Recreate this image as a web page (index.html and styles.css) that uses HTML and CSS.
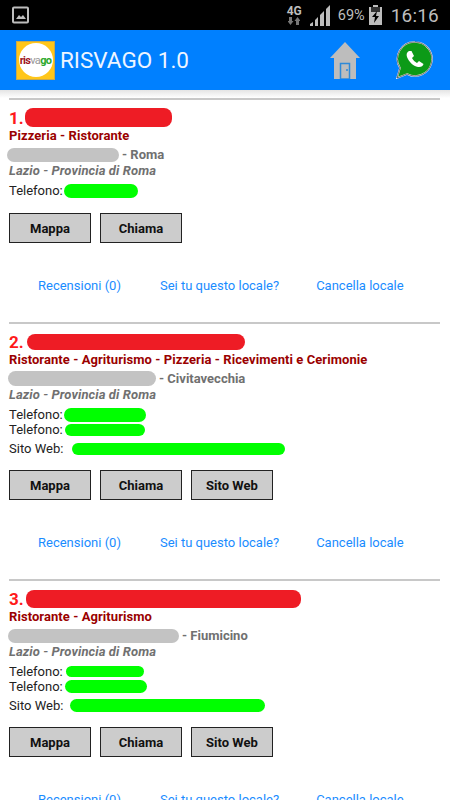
FILE: index.html
```html
<!DOCTYPE html>
<html>
<head>
	<meta charset="UTF-8">
	<title>RISVAGO 1.0</title>
	<link rel="stylesheet" href="styles.css">
</head>
<body>
<div class="phone">
	<div class="statusbar">
		<svg class="pic-icon" width="17" height="18" viewBox="0 0 17 18">
			<rect x="1" y="1.500" width="15" height="15" rx="1" fill="#000" stroke="#bdbdbd" stroke-width="2"/>
			<path d="M4 13l3-4 2 2 2-2 3 4z" fill="#bdbdbd"/>
		</svg>
		<div class="status-right">
			<div class="net"><span>4G</span><svg width="12" height="8" viewBox="0 0 12 8"><path d="M1 0h3v4h1.500L2.500 8-.5 4H1zM8 8h3V4h1.500L9.500 0l-3 4H8z" fill="#777"/></svg></div>
			<svg class="signal" width="20" height="21" viewBox="0 0 20 21">
				<path d="M0 21v-2l3-2v4zM5 21v-6l3-3v9zM10 21V10l4-4v15zM16 21V4l4-4v21z" fill="#bdbdbd"/>
			</svg>
			<span class="pct">69%</span>
			<svg class="batt" width="13" height="20" viewBox="0 0 13 20">
				<path d="M4 0h5v2h4v18H0V2h4z" fill="#bdbdbd"/>
				<path d="M2 2h9v5H2z" fill="#333"/>
				<path d="M8 6L3 12h3l-1 6 5-7H7z" fill="#000"/>
			</svg>
			<span class="clock">16:16</span>
		</div>
	</div>

	<div class="topbar">
		<div class="logo"><div class="logo-disc"><span class="r1">ris</span><span class="r2">va</span><span class="r3">go</span></div></div>
		<div class="app-title">RISVAGO 1.0</div>
		<svg class="home" width="30" height="37" viewBox="0 0 30 37">
			<path d="M15 0L30 16H0z" fill="#bdbdbd"/>
			<path d="M4 16h22v21H4z" fill="#bdbdbd"/>
			<path d="M10.500 21.500h9V37h-9z" fill="none" stroke="#2f8ad8" stroke-width="1.500"/>
			<circle cx="17" cy="28" r="1" fill="#2f8ad8"/>
		</svg>
		<svg class="whatsapp" width="37" height="38" viewBox="0 0 37 38">
			<path d="M19 1a17 17 0 1 1-8 32L1 37l3-10A17 17 0 0 1 19 1z" fill="#0c9a17" stroke="#fff" stroke-width="1.500"/>
			<path d="M19 1a17 17 0 1 1-8 32L1 37l3-10A17 17 0 0 1 19 1z" fill="none" stroke="#111" stroke-width=".6"/>
			<path d="M13 10c-2 1-3 3-2 6 2 5 6 9 11 10 3 .5 5-1 5.500-3l-4.500-3-2 2c-2-1-4-3-5-5l2-2-2.500-5z" fill="#fff"/>
		</svg>
	</div>

	<div class="list">
		<div class="item">
			<div class="name-row"><span class="num">1.</span><span class="blot red w-1"></span></div>
			<div class="cat">Pizzeria - Ristorante</div>
			<div class="addr"><span class="blot grey w-a1"></span><span>- Roma</span></div>
			<div class="region">Lazio - Provincia di Roma</div>
			<div class="contacts">
				<div class="line">Telefono:<span class="blot green w-t1"></span></div>
			</div>
			<div class="btns"><div class="btn">Mappa</div><div class="btn">Chiama</div></div>
			<div class="links"><span>Recensioni (0)</span><span>Sei tu questo locale?</span><span>Cancella locale</span></div>
		</div>

		<div class="item">
			<div class="name-row"><span class="num">2.</span><span class="blot red w-2"></span></div>
			<div class="cat">Ristorante - Agriturismo - Pizzeria - Ricevimenti e Cerimonie</div>
			<div class="addr"><span class="blot grey w-a2"></span><span>- Civitavecchia</span></div>
			<div class="region">Lazio - Provincia di Roma</div>
			<div class="contacts">
				<div class="line">Telefono:<span class="blot green w-t2"></span></div>
				<div class="line">Telefono:<span class="blot green w-t2b"></span></div>
				<div class="line web">Sito Web:<span class="blot green w-s2"></span></div>
			</div>
			<div class="btns"><div class="btn">Mappa</div><div class="btn">Chiama</div><div class="btn">Sito Web</div></div>
			<div class="links"><span>Recensioni (0)</span><span>Sei tu questo locale?</span><span>Cancella locale</span></div>
		</div>

		<div class="item">
			<div class="name-row"><span class="num">3.</span><span class="blot red w-3"></span></div>
			<div class="cat">Ristorante - Agriturismo</div>
			<div class="addr"><span class="blot grey w-a3"></span><span>- Fiumicino</span></div>
			<div class="region">Lazio - Provincia di Roma</div>
			<div class="contacts">
				<div class="line">Telefono:<span class="blot green w-t3"></span></div>
				<div class="line">Telefono:<span class="blot green w-t3b"></span></div>
				<div class="line web">Sito Web:<span class="blot green w-s3"></span></div>
			</div>
			<div class="btns"><div class="btn">Mappa</div><div class="btn">Chiama</div><div class="btn">Sito Web</div></div>
			<div class="links"><span>Recensioni (0)</span><span>Sei tu questo locale?</span><span>Cancella locale</span></div>
		</div>
	</div>
</div>
</body>
</html>
```

FILE: styles.css
```css
html, body {
	margin: 0;
	padding: 0;
	background: #fff;
}
body {
	font-family: Roboto, "Liberation Sans", sans-serif;
}
.phone {
	width: 450px;
	height: 800px;
	overflow: hidden;
	display: flex;
	flex-direction: column;
}

/* status bar */
.statusbar {
	height: 30px;
	flex: none;
	background: #000;
	display: flex;
	align-items: center;
	justify-content: space-between;
	padding: 0 11px 0 12px;
}
.status-right {
	display: flex;
	align-items: center;
	color: #bdbdbd;
}
.net {
	width: 17px;
	display: flex;
	flex-direction: column;
	align-items: center;
	font-size: 12px;
	font-weight: 700;
	line-height: 12px;
	margin-right: 7px;
}
.signal {
	margin-right: 8px;
}
.pct {
	font-size: 14.500px;
	margin-right: 4px;
}
.batt {
	margin-right: 9px;
}
.clock {
	font-size: 19px;
	letter-spacing: .2px;
}

/* app bar */
.topbar {
	height: 60px;
	flex: none;
	background: #0080ff;
	display: flex;
	align-items: center;
	padding-left: 16px;
}
.logo {
	width: 39px;
	height: 39px;
	box-sizing: border-box;
	background: #ffc61a;
	border: 1px solid #c9a94a;
	display: flex;
	align-items: center;
	justify-content: center;
}
.logo-disc {
	width: 34px;
	height: 34px;
	border-radius: 50%;
	background: #fff;
	display: flex;
	align-items: center;
	justify-content: center;
	font-size: 11px;
	font-weight: 700;
	letter-spacing: -.7px;
}
.r1 { color: #a01622; }
.r2 { color: #999; font-weight: 400; }
.r3 { color: #2aa82a; }
.app-title {
	margin-left: 5px;
	font-size: 22.500px;
	color: #eef5ff;
	flex: 1;
}
.home {
	margin-right: 36px;
}
.whatsapp {
	margin-right: 17px;
}

/* list */
.list {
	flex: 1;
	padding: 8px 10px 0 9px;
	background: linear-gradient(#e4e4e4, #fff 8px) no-repeat;
}
.item {
	border-top: 2px solid #c8c8c8;
	padding-bottom: 29px;
}
.name-row {
	display: flex;
	align-items: center;
	height: 21px;
	margin-top: 7px;
}
.num {
	font-size: 17px;
	font-weight: 700;
	color: #ff1a1a;
	width: 16px;
	flex: none;
}
.blot {
	display: inline-block;
	border-radius: 8px;
}
.red { background: #ee1c25; height: 18px; }
.grey { background: #c3c3c3; height: 14px; margin-right: 3px; }
.green { background: #00ff00; height: 13px; border-radius: 7px; }
.w-1 { width: 147px; height: 19px; }
.w-2 { width: 218px; margin-left: 2px; height: 16px; }
.w-3 { width: 275px; margin-left: 1px; }
.w-a1 { width: 112px; margin-left: -2px; }
.w-a2 { width: 148px; margin-left: -1px; height: 15px; }
.w-a3 { width: 171px; margin-left: -1px; }
.w-t1 { width: 74px; margin-left: 1px; height: 14px; }
.w-t2 { width: 82px; margin-left: 1px; height: 14px; }
.w-t2b { width: 80px; margin-left: 2px; height: 12px; }
.w-t3 { width: 78px; margin-left: 3px; height: 11px; }
.w-t3b { width: 82px; margin-left: 2px; }
.w-s2 { width: 213px; margin-left: 9px; height: 12px; }
.w-s3 { width: 195px; margin-left: 7px; }
.cat {
	font-size: 13px;
	font-weight: 700;
	color: #9a0000;
	line-height: 16px;
	letter-spacing: .07px;
	white-space: nowrap;
}
.addr {
	display: flex;
	align-items: center;
	margin-top: 3px;
	font-size: 13px;
	font-weight: 700;
	color: #707070;
	line-height: 15px;
}
.region {
	margin-top: 1px;
	font-size: 13px;
	font-weight: 700;
	font-style: italic;
	color: #707070;
	line-height: 15px;
	letter-spacing: .1px;
}
.contacts {
	margin-top: 5px;
}
.line {
	display: flex;
	align-items: center;
	font-size: 13px;
	color: #222;
	height: 15px;
}
.line.web {
	height: 13px;
	margin-top: 5px;
}
.btns {
	display: flex;
	gap: 9px;
	margin-top: 15px;
}
.btn {
	width: 82px;
	height: 30px;
	box-sizing: border-box;
	background: #cccccc;
	border: 1px solid #222;
	font-size: 13px;
	font-weight: 700;
	color: #111;
	display: flex;
	align-items: center;
	justify-content: center;
}
.links {
	display: flex;
	font-size: 13px;
	color: #1a8cff;
	margin-top: 35px;
	padding-left: 29px;
}
.links span:nth-child(2) {
	margin-left: 39px;
}
.links span:nth-child(3) {
	margin-left: 37px;
}
```
